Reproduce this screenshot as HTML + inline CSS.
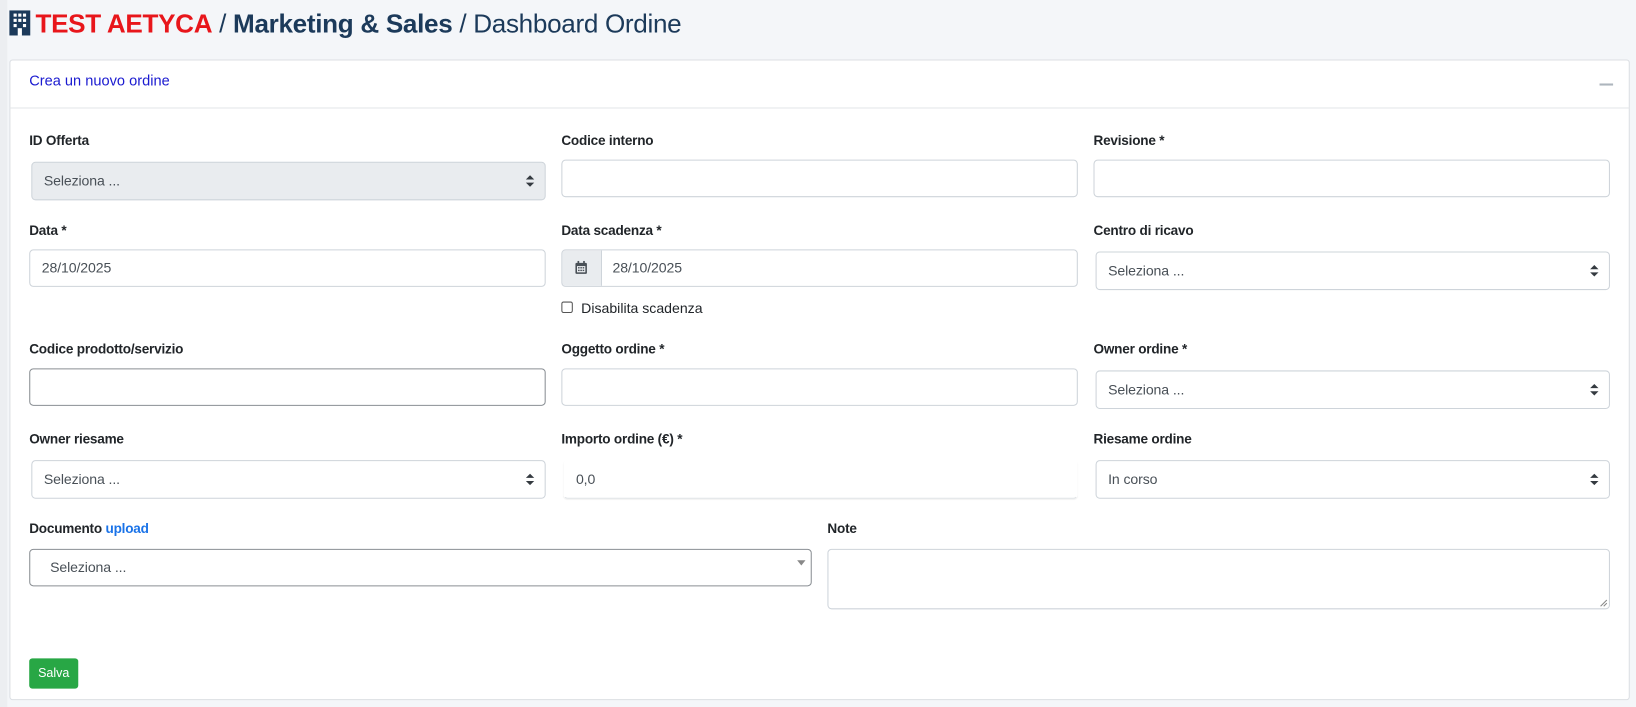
<!DOCTYPE html>
<html><head><meta charset="utf-8"><style>
html,body{margin:0;padding:0;width:1636px;height:707px;overflow:hidden;background:#f4f6f9;}
#w{position:absolute;left:0;top:0;width:1568px;height:678px;transform:scale(1.0434);transform-origin:0 0;font-family:"Liberation Sans",sans-serif;color:#212529;}
.a{position:absolute;}
.title{left:8px;top:8px;font-size:25px;white-space:nowrap;color:#1c3a5a;letter-spacing:-0.3px}
.card{left:9px;top:57px;width:1553px;height:614px;background:#fff;border:1px solid #dcdfe3;border-radius:3px;box-sizing:border-box;}
.hdr{left:9px;top:103px;width:1553px;height:1px;background:#e3e5e8}
.lbl{font-size:13px;font-weight:bold;color:#212529;letter-spacing:-0.2px}
.in{box-sizing:border-box;border:1px solid #ced4da;border-radius:4px;background:#fff;height:36px;font-size:13.5px;color:#495057;line-height:34px;padding-left:11px;letter-spacing:-0.1px}
.sel::after{content:"";position:absolute;right:10px;top:12px;border:4px solid transparent;border-bottom:4px solid #343a40;border-top:none;}
.sel::before{content:"";position:absolute;right:10px;top:19px;border:4px solid transparent;border-top:4px solid #343a40;border-bottom:none;}
</style></head><body><div id="w">
<div class="a" style="left:0;top:0;width:7px;height:678px;background:#eceef1"></div>
<div class="a title"><svg width="22" height="26" viewBox="0 0 22 26" style="vertical-align:-3px;margin-right:4px"><rect x="1" y="2" width="20" height="24" fill="#1c3a5a"/><g fill="#fff"><rect x="5" y="5" width="3" height="3"/><rect x="9.5" y="5" width="3" height="3"/><rect x="14" y="5" width="3" height="3"/><rect x="5" y="10" width="3" height="3"/><rect x="9.5" y="10" width="3" height="3"/><rect x="14" y="10" width="3" height="3"/><rect x="5" y="15" width="3" height="3"/><rect x="14" y="15" width="3" height="3"/><rect x="9" y="19" width="4" height="7"/></g></svg><b style="color:#e8161b">TEST AETYCA</b> / <b>Marketing &amp; Sales</b> / Dashboard Ordine</div>
<div class="a card"></div>
<div class="a hdr"></div>
<div class="a" style="left:28px;top:69px;font-size:14px;color:#1a1ad0">Crea un nuovo ordine</div>
<div class="a" style="left:1533px;top:80px;width:13px;height:2px;background:#adb5bd"></div>

<div class="a lbl" style="left:28px;top:127px">ID Offerta</div>
<div class="a in sel" style="left:30px;top:155px;width:493px;height:37px;background:#e9ecef;line-height:35px">Seleziona ...</div>
<div class="a lbl" style="left:538px;top:127px">Codice interno</div>
<div class="a in" style="left:538px;top:153px;width:495px"></div>
<div class="a lbl" style="left:1048px;top:127px">Revisione *</div>
<div class="a in" style="left:1048px;top:153px;width:495px"></div>

<div class="a lbl" style="left:28px;top:213px">Data *</div>
<div class="a in" style="left:28px;top:239px;width:495px">28/10/2025</div>
<div class="a lbl" style="left:538px;top:213px">Data scadenza *</div>
<div class="a in" style="left:538px;top:239px;width:495px;padding-left:48px">28/10/2025</div>
<div class="a" style="left:539px;top:240px;width:37px;height:34px;background:#e9ecef;border-right:1px solid #ced4da;border-radius:3px 0 0 3px"><svg class="a" style="left:12px;top:10px" width="12" height="13" viewBox="0 0 12 13"><rect x="0.5" y="2" width="11" height="10.5" rx="1" fill="#495057"/><rect x="2" y="5" width="8" height="6" fill="#e9ecef"/><rect x="2.5" y="0" width="1.6" height="3" fill="#495057"/><rect x="7.9" y="0" width="1.6" height="3" fill="#495057"/><g fill="#495057"><rect x="3" y="6" width="1.5" height="1.3"/><rect x="5.2" y="6" width="1.5" height="1.3"/><rect x="7.4" y="6" width="1.5" height="1.3"/><rect x="3" y="8.5" width="1.5" height="1.3"/><rect x="5.2" y="8.5" width="1.5" height="1.3"/><rect x="7.4" y="8.5" width="1.5" height="1.3"/></g></svg></div>
<div class="a" style="left:538px;top:289px;width:11px;height:11px;border:1px solid #555;border-radius:2px;box-sizing:border-box"></div>
<div class="a" style="left:557px;top:288px;font-size:13.5px;color:#212529">Disabilita scadenza</div>
<div class="a lbl" style="left:1048px;top:213px">Centro di ricavo</div>
<div class="a in sel" style="left:1050px;top:241px;width:493px;height:37px;line-height:35px">Seleziona ...</div>

<div class="a lbl" style="left:28px;top:327px">Codice prodotto/servizio</div>
<div class="a in" style="left:28px;top:353px;width:495px;border-color:#8a8f94"></div>
<div class="a lbl" style="left:538px;top:327px">Oggetto ordine *</div>
<div class="a in" style="left:538px;top:353px;width:495px"></div>
<div class="a lbl" style="left:1048px;top:327px">Owner ordine *</div>
<div class="a in sel" style="left:1050px;top:355px;width:493px;height:37px;line-height:35px">Seleziona ...</div>

<div class="a lbl" style="left:28px;top:413px">Owner riesame</div>
<div class="a in sel" style="left:30px;top:441px;width:493px;height:37px;line-height:35px">Seleziona ...</div>
<div class="a lbl" style="left:538px;top:413px">Importo ordine (€) *</div>
<div class="a in" style="left:540px;top:441px;width:493px;height:37px;line-height:35px;border-color:#fff;border-bottom-color:#dee2e6;box-shadow:0 1px 1px rgba(0,0,0,.05)">0,0</div>
<div class="a lbl" style="left:1048px;top:413px">Riesame ordine</div>
<div class="a in sel" style="left:1050px;top:441px;width:493px;height:37px;line-height:35px">In corso</div>

<div class="a lbl" style="left:28px;top:499px">Documento <span style="color:#1a73e8">upload</span></div>
<div class="a in" style="left:28px;top:526px;width:750px;border-color:#8a8f94;padding-left:19px">Seleziona ...</div>
<div class="a" style="left:764px;top:537px;border:4px solid transparent;border-top:5px solid #888;border-bottom:none"></div>
<div class="a lbl" style="left:793px;top:499px">Note</div>
<div class="a in" style="left:793px;top:526px;width:750px;height:58px"></div>
<svg class="a" style="left:1533px;top:574px" width="8" height="8"><path d="M1 7L7 1M4 7L7 4" stroke="#888" stroke-width="1"/></svg>

<div class="a" style="left:28px;top:631px;width:47px;height:29px;background:#28a745;border-radius:3px;color:#fff;font-size:12px;line-height:29px;text-align:center">Salva</div>
</div></body></html>
